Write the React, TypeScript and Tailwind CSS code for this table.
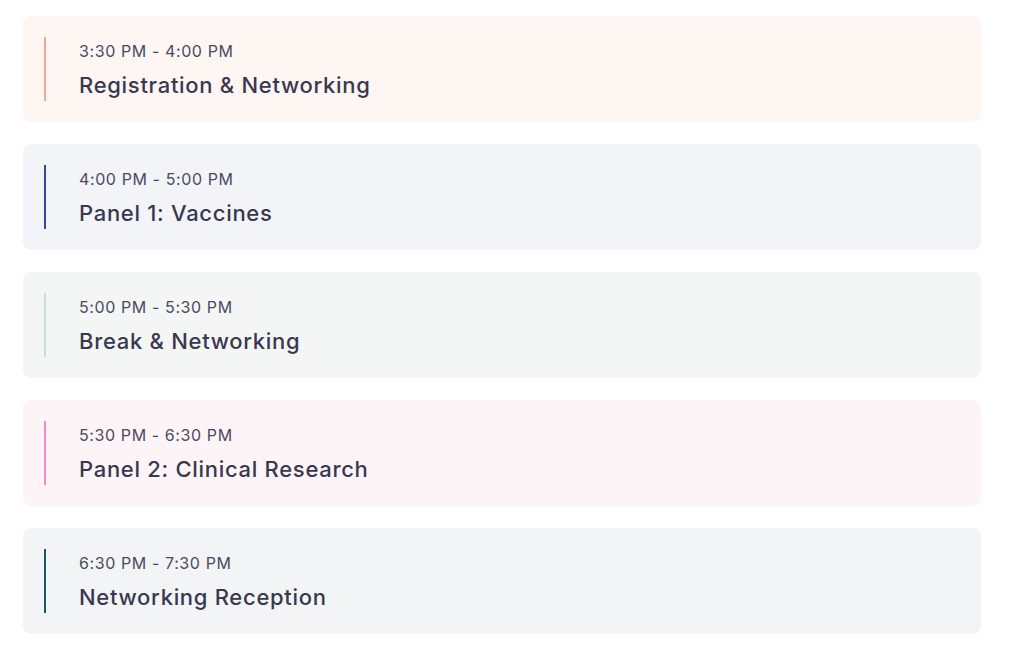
import React from "react";

const items = [
  { time: "3:30 PM - 4:00 PM", title: "Registration & Networking", bg: "bg-[#fdf6f3]", bar: "bg-[#f2a991]" },
  { time: "4:00 PM - 5:00 PM", title: "Panel 1: Vaccines", bg: "bg-[#f3f4f8]", bar: "bg-[#3a4a98]" },
  { time: "5:00 PM - 5:30 PM", title: "Break & Networking", bg: "bg-[#f4f6f5]", bar: "bg-[#cbe0d3]" },
  { time: "5:30 PM - 6:30 PM", title: "Panel 2: Clinical Research", bg: "bg-[#fdf4f7]", bar: "bg-[#f28bb5]" },
  { time: "6:30 PM - 7:30 PM", title: "Networking Reception", bg: "bg-[#f3f4f6]", bar: "bg-[#1d5561]" },
];

export default function App() {
  return (
    <div
      className="w-[1024px] h-[668px] bg-white pl-[23px] pt-[16px] flex flex-col gap-[22px]"
      style={{ fontFamily: "Inter, 'Noto Sans', sans-serif" }}
    >
      {items.map((it) => (
        <div key={it.time} className={`w-[958px] h-[106px] rounded-[8px] ${it.bg} px-[21px] py-[21px] flex`}>
          <div className={`w-[2px] self-stretch ${it.bar}`} />
          <div className="ml-[33px] flex flex-col pt-[2px]">
            <div className="text-[16px] leading-[24px] text-[#4a4b62] font-normal tracking-[0.6px]">{it.time}</div>
            <div className="mt-[8px] text-[22px] leading-[28px] text-[#383850] font-medium tracking-[0.7px]">{it.title}</div>
          </div>
        </div>
      ))}
    </div>
  );
}
